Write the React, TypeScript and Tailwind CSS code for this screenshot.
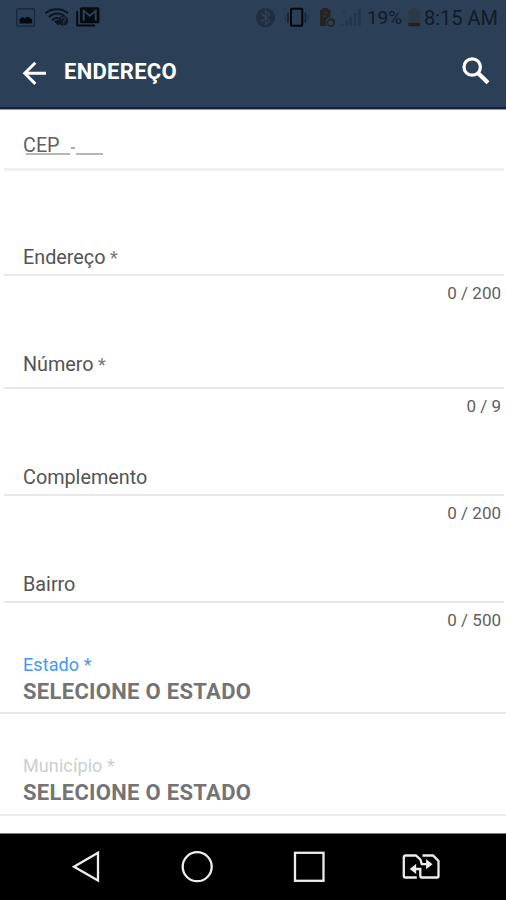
function StatusBar() {
  return (
    <div className="flex h-9 w-full shrink-0 text-[#101b29]">
      <svg className="h-9 w-[253px] shrink-0" viewBox="0 0 253 36" fill="none">
        <rect x="16.8" y="8.8" width="17.6" height="17.4" rx="1" stroke="#15243a" strokeWidth="1.2" />
        <path d="M19.5 23.5v-4.2l3-2.5 2.2 1.7 3-2 2.2 1.2 2.2 1.8v4z" fill="#040a12" />
        <g stroke="#0b1522" strokeWidth="2">
          <path d="M45.5 13.3C51.5 8 62 8 68 13.3" />
          <path d="M48.8 17C54 12.8 60 12.8 64.5 16" />
          <path d="M52.2 20.2c2-2 4.2-2.5 6.2-2" />
        </g>
        <circle cx="63.2" cy="20.8" r="5" fill="#0e1a29" />
        <path d="M61.2 19.2c.2-2.6 4.2-2.4 4.1 0 0 1.6-2 1.5-2 3.2m0 1v1.2" stroke="#2b4056" strokeWidth="1.1" />
        <path d="M54 21l4 4.4 2-2.1-2-3.3z" fill="#0b1522" />
        <path d="M77.2 11v14.4H95" stroke="#050b13" strokeWidth="2" />
        <rect x="80" y="7.3" width="19.4" height="16" rx="1.5" fill="#050b13" />
        <path d="M83.7 20.5V10.8l6 5 6-5v9.7" stroke="#2b4056" strokeWidth="2" />
      </svg>
      <svg className="h-9 w-[113px] shrink-0" viewBox="253 0 113 36" fill="none">
        <circle cx="265.5" cy="17.6" r="9.7" fill="#202f40" />
        <path d="M261.3 13.5l8.2 7.5-4 3.5V10.7l4 3.6-8.2 7.4" stroke="#2c4259" strokeWidth="1.3" />
        <rect x="291" y="8.8" width="11.3" height="17" rx="1" stroke="#03070d" strokeWidth="2" />
        <path d="M288 12.5v10M305.4 12.5v10" stroke="#142337" strokeWidth="1.7" />
        <path d="M285.4 15v5.2M308 15v5.2" stroke="#1d3046" strokeWidth="1.2" />
        <path d="M320 26V9.7h2.3V8h5.6v1.7h2.5v7.2c-4 .6-5.5 4.6-4 9.1z" fill="#252321" />
        <path d="M323 13h5m-5 3h4" stroke="#39372f" />
        <circle cx="330.8" cy="22.8" r="3.4" stroke="#222324" strokeWidth="1.8" />
        <path d="M332.5 17.6l2.7 3.3-4 .3z" fill="#222324" />
        <g fill="#23364a">
          <rect x="341" y="23.5" width="2.5" height="2.5" />
          <rect x="345.4" y="20.5" width="2.5" height="5.5" />
          <rect x="349.6" y="17" width="2.5" height="9" />
          <rect x="353.8" y="13" width="2.5" height="13" />
          <rect x="358" y="9" width="2.7" height="17" />
        </g>
        <path d="M342 12h4m-2-2v4" stroke="#263a4f" />
      </svg>
      <span className="mt-[6px] w-[42px] shrink-0 whitespace-nowrap pl-[1px] text-[19px] leading-6 tracking-[-0.1px]">19%</span>
      <svg className="h-9 w-[15px] shrink-0" viewBox="408 0 15 36">
        <path d="M408.4 26V10.3h3V8h5.4v2.3h3V26z" fill="#293946" />
        <path d="M408.4 23h11.4v3.2h-11.4z" fill="#2b1c16" />
      </svg>
      <span className="mt-[6px] whitespace-nowrap pl-[1px] text-[20px] leading-6">8:15 AM</span>
    </div>
  );
}

function Header() {
  return (
    <header className="h-[110px] shrink-0 border-b border-[#949eb0] bg-[#2b4056]">
      <div className="flex h-[109px] flex-col border-b-2 border-[#0d2148]">
        <StatusBar />
        <div className="flex h-[71px] items-center text-white">
          <svg className="ml-[22px] h-7 w-6 shrink-0" viewBox="22 58 24 28" fill="none" stroke="currentColor" strokeWidth="2.9">
            <path d="M46 73.3H25M35.3 62.7L24.7 73.3l10.6 10.6" />
          </svg>
          <h1 className="ml-[18px] whitespace-nowrap pt-px text-[22px] font-bold leading-7 tracking-[0.3px]">ENDEREÇO</h1>
          <svg className="mb-1 ml-auto mr-[14px] h-8 w-8" viewBox="460 53 32 32" fill="none" stroke="currentColor">
            <circle cx="472.2" cy="66" r="8.2" strokeWidth="3.2" />
            <path d="M478 72l10 9.7" strokeWidth="4.2" />
          </svg>
        </div>
      </div>
    </header>
  );
}

interface FieldProps {
  label: string;
  count: string;
  required?: boolean;
  className: string;
  labelRow: string;
}

function Field({ label, count, required, className, labelRow }: FieldProps) {
  return (
    <div className={className}>
      <div className={labelRow}>
        <label className="text-[19.8px] leading-6 text-[#545454]">
          {label}
          {required && <span className="text-[18px] text-[#777777]"> *</span>}
        </label>
      </div>
      <div className="h-[29px] shrink-0 pr-[5px] pt-[5px] text-right text-[17px] leading-6 text-[#606060]">{count}</div>
    </div>
  );
}

function SelectField({ label, className, labelColor }: { label: string; className: string; labelColor: string }) {
  return (
    <div className={className}>
      <label className={labelColor}>{label}</label>
      <div className="whitespace-nowrap text-[22px] font-bold leading-7 tracking-[0.3px] text-[#747474]">SELECIONE O ESTADO</div>
    </div>
  );
}

export default function App() {
  return (
    <div className="flex h-[900px] w-[506px] flex-col overflow-hidden bg-white font-[Roboto,sans-serif]">
      <Header />
      <main className="flex grow flex-col">
        <div className="relative ml-1 mr-0.5 h-[61px] shrink-0 border-b-[3px] border-[#f1f1f1] pl-[19px] pt-6">
          <label className="block text-[19.8px] leading-6 text-[#606060]">CEP</label>
          <span className="absolute left-[22px] top-[43px] h-[1.5px] w-[44px] bg-[#b5b5b5]" />
          <span className="absolute left-[67px] top-[37px] h-[1.5px] w-[4px] bg-[#aaaaaa]" />
          <span className="absolute left-[72px] top-[43px] h-[1.5px] w-[27px] bg-[#b5b5b5]" />
        </div>
        <Field
          className="flex h-[134px] shrink-0 flex-col"
          labelRow="ml-1 mr-0.5 flex grow items-end border-b-2 border-[#e8e8e8] pb-1 pl-[19px]"
          label="Endereço"
          required
          count="0 / 200"
        />
        <Field
          className="flex h-[113px] shrink-0 flex-col"
          labelRow="ml-1 mr-0.5 flex grow items-end border-b-2 border-[#e8e8e8] pb-2.5 pl-[19px]"
          label="Número"
          required
          count="0 / 9"
        />
        <Field
          className="flex h-[107px] shrink-0 flex-col"
          labelRow="ml-1 mr-0.5 flex grow items-end border-b-2 border-[#e8e8e8] pb-1 pl-[19px]"
          label="Complemento"
          count="0 / 200"
        />
        <Field
          className="flex h-[107px] shrink-0 flex-col"
          labelRow="ml-1 mr-0.5 flex grow items-end border-b-2 border-[#e8e8e8] pb-1 pl-[19px]"
          label="Bairro"
          count="0 / 500"
        />
        <SelectField
          className="h-[82px] shrink-0 border-b-2 border-[#e8e8e8] pl-[23px] pt-5"
          labelColor="block text-[18px] leading-[26px] tracking-[0.1px] text-[#3f9af0]"
          label="Estado *"
        />
        <SelectField
          className="h-[102px] shrink-0 border-b-2 border-[#ececec] pl-[23px] pt-[39px]"
          labelColor="block text-[18px] leading-[26px] tracking-[0.1px] text-[#cecece]"
          label="Município *"
        />
      </main>
      <nav className="h-[67px] shrink-0 border-t border-[#777777] bg-black">
        <svg className="h-[66px] w-full" viewBox="0 834 506 66" fill="none" stroke="#ededed" strokeWidth="2.3">
          <path d="M98 852.8v27.6L74 866.7z" />
          <circle cx="197.2" cy="866.7" r="14.5" />
          <rect x="295" y="852.8" width="28.5" height="28" />
          <path d="M416.8 877.5h-11.5a1.5 1.5 0 0 1-1.5-1.5v-18.5a2 2 0 0 1 2-2h10l4.5 4 1.5 4.7h6" />
          <path d="M422.5 855.5h10.5l5.5 5.5v15a1.5 1.5 0 0 1-1.5 1.5h-15.5a1.2 1.2 0 0 1-1.2-1.2v-7.3h-6" />
          <path d="M426.8 860.5l4.700 3.700-4.700 3.700zM415.500 865.200l-4.700 3.700 4.700 3.700z" fill="#ededed" strokeWidth="1.3" />
        </svg>
      </nav>
    </div>
  );
}
